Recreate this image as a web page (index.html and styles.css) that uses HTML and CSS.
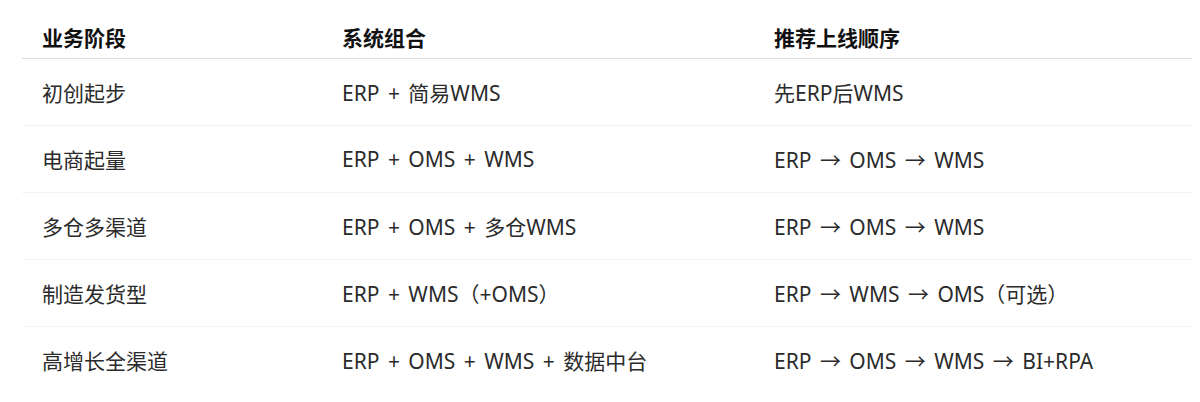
FILE: index.html
```html
<!DOCTYPE html>
<html lang="zh-CN">

<head>
    <meta charset="UTF-8">
    <meta name="viewport" content="width=device-width, initial-scale=1.0">
    <title>系统组合</title>
    <link rel="stylesheet" href="styles.css">
</head>

<body>

    <table class="plan">
        <thead>
            <tr>
                <th class="stage">业务阶段</th>
                <th class="combo">系统组合</th>
                <th class="order">推荐上线顺序</th>
            </tr>
        </thead>
        <tbody>
            <tr>
                <td>初创起步</td>
                <td>ERP + 简易WMS</td>
                <td>先ERP后WMS</td>
            </tr>
            <tr>
                <td>电商起量</td>
                <td>ERP + OMS + WMS</td>
                <td>ERP → OMS → WMS</td>
            </tr>
            <tr>
                <td>多仓多渠道</td>
                <td>ERP + OMS + 多仓WMS</td>
                <td>ERP → OMS → WMS</td>
            </tr>
            <tr>
                <td>制造发货型</td>
                <td>ERP + WMS（+OMS）</td>
                <td>ERP → WMS → OMS（可选）</td>
            </tr>
            <tr>
                <td>高增长全渠道</td>
                <td>ERP + OMS + WMS + 数据中台</td>
                <td>ERP → OMS → WMS → BI+RPA</td>
            </tr>
        </tbody>
    </table>

</body>
</html>
```

FILE: styles.css
```css
body {
    margin: 0;
    background-color: #ffffff;
    font-family: "Noto Sans", "Noto Sans CJK SC", sans-serif;
    color: #2b2b2b;
}

.plan {
    margin: 15px 0 0 22px;
    width: 1170px;
    border-collapse: collapse;
    font-size: 21px;
}

.plan th,
.plan td {
    text-align: left;
    padding: 0 0 0 20px;
}

.plan th {
    height: 43px;
    font-weight: bold;
    color: #111111;
    border-bottom: 1px solid #dcdcdc;
}

.stage {
    width: 280px;
}

.combo {
    width: 412px;
}

.plan td {
    height: 66px;
    word-spacing: 3px;
    border-bottom: 1px solid #f3f3f3;
}

.plan tbody tr:last-child td {
    border-bottom: none;
}
```
